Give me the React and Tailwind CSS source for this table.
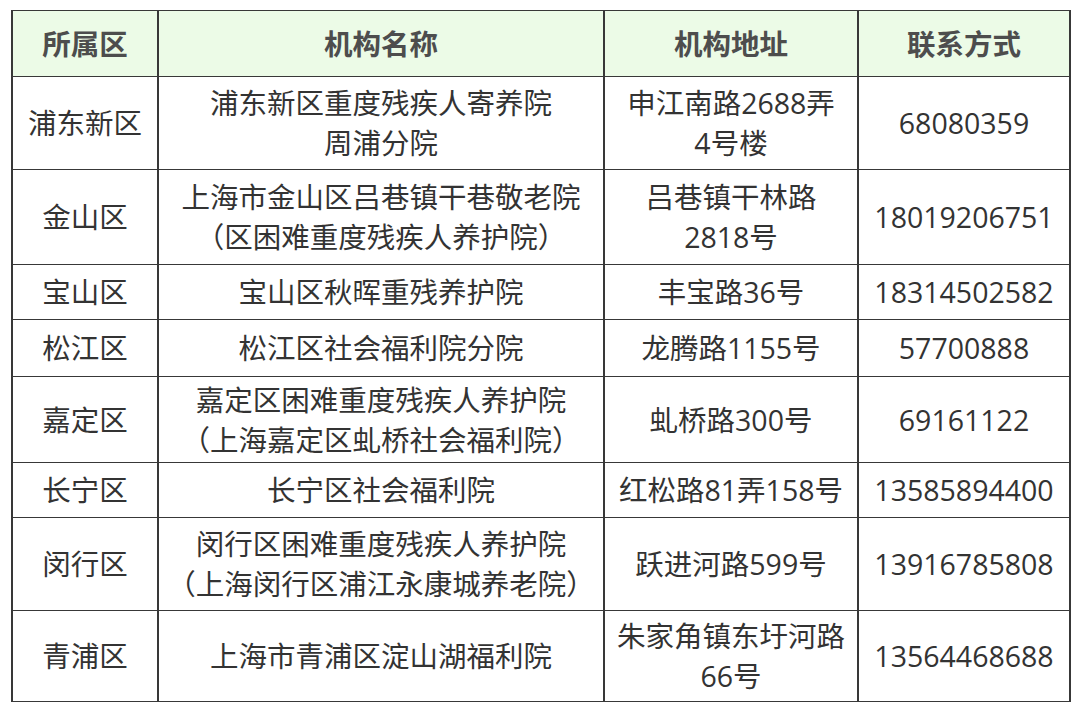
const rows = [
  { h: "h-[93px]", area: "浦东新区", name: ["浦东新区重度残疾人寄养院", "周浦分院"], addr: ["申江南路2688弄", "4号楼"], tel: "68080359" },
  { h: "h-[95px]", area: "金山区", name: ["上海市金山区吕巷镇干巷敬老院", "（区困难重度残疾人养护院）"], addr: ["吕巷镇干林路", "2818号"], tel: "18019206751" },
  { h: "h-[55px]", area: "宝山区", name: ["宝山区秋晖重残养护院"], addr: ["丰宝路36号"], tel: "18314502582" },
  { h: "h-[57px]", area: "松江区", name: ["松江区社会福利院分院"], addr: ["龙腾路1155号"], tel: "57700888" },
  { h: "h-[86px]", area: "嘉定区", name: ["嘉定区困难重度残疾人养护院", "（上海嘉定区虬桥社会福利院）"], addr: ["虬桥路300号"], tel: "69161122" },
  { h: "h-[55px]", area: "长宁区", name: ["长宁区社会福利院"], addr: ["红松路81弄158号"], tel: "13585894400" },
  { h: "h-[93px]", area: "闵行区", name: ["闵行区困难重度残疾人养护院", "（上海闵行区浦江永康城养老院）"], addr: ["跃进河路599号"], tel: "13916785808" },
  { h: "h-[91px]", area: "青浦区", name: ["上海市青浦区淀山湖福利院"], addr: ["朱家角镇东圩河路", "66号"], tel: "13564468688" },
];

const cell = "border-x-2 border-y-[1.5px] border-[#383838] text-center align-middle p-0";

function Lines({ items }) {
  return items.map((t, i) => (
    <div key={i} className="whitespace-nowrap">
      {t}
    </div>
  ));
}

export default function App() {
  return (
    <div className="w-[1080px] h-[713px] bg-white pt-[10px] pl-[11px] font-['Open_Sans','Noto_Sans_CJK_SC',sans-serif]">
      <table className="border-collapse table-fixed w-[1058px] text-[28.5px] leading-[40px] text-[#333]">
        <colgroup>
          <col className="w-[146px]" />
          <col className="w-[446px]" />
          <col className="w-[254px]" />
          <col className="w-[212px]" />
        </colgroup>
        <thead>
          <tr className="h-[66px] bg-[#ecfbe7] text-[#4d4d4d] font-bold">
            <th className={cell}>所属区</th>
            <th className={cell}>机构名称</th>
            <th className={cell}>机构地址</th>
            <th className={cell}>联系方式</th>
          </tr>
        </thead>
        <tbody>
          {rows.map((r) => (
            <tr key={r.area} className={r.h}>
              <td className={cell}>{r.area}</td>
              <td className={cell}>
                <Lines items={r.name} />
              </td>
              <td className={cell}>
                <Lines items={r.addr} />
              </td>
              <td className={cell}>{r.tel}</td>
            </tr>
          ))}
        </tbody>
      </table>
    </div>
  );
}
